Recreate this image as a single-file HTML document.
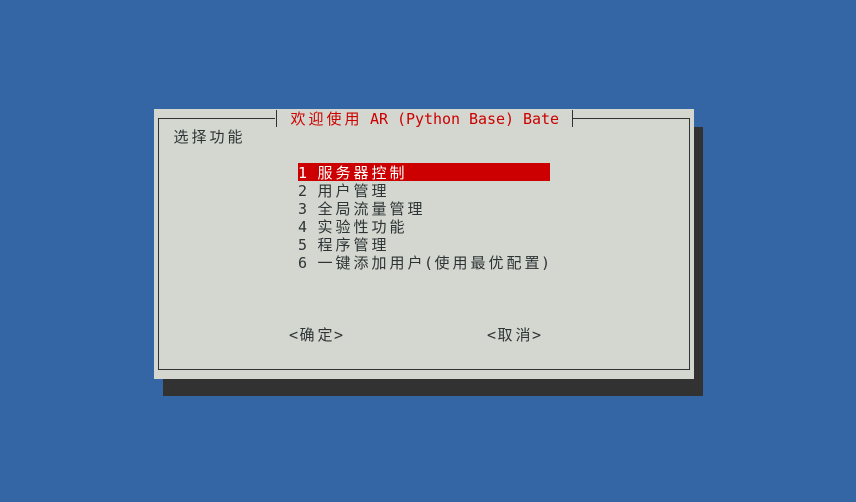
<!DOCTYPE html>
<html><head><meta charset="utf-8"><style>
body{margin:0;width:856px;height:502px;background:#3465a4;position:relative;overflow:hidden;font-family:"DejaVu Sans Mono","Noto Sans CJK SC",monospace;font-size:15px;color:#2e3436}
.a{position:absolute;white-space:nowrap;height:18px;line-height:20px}
.a span{display:inline-block;width:9px;text-align:center}
.a span.c{width:18px}
.l{position:absolute;background:#2e3436}
</style></head><body>
<div style="position:absolute;left:163px;top:127px;width:540px;height:269px;background:#323232"></div>
<div style="position:absolute;left:154px;top:109px;width:540px;height:270px;background:#d3d7cf"></div>
<div class="l" style="left:158px;top:118px;width:117px;height:1px"></div>
<div class="l" style="left:573px;top:118px;width:117px;height:1px"></div>
<div class="l" style="left:158px;top:118px;width:1px;height:252px"></div>
<div class="l" style="left:689px;top:118px;width:1px;height:252px"></div>
<div class="l" style="left:158px;top:369px;width:532px;height:1px"></div>
<div class="l" style="left:276px;top:110px;width:1px;height:17px"></div>
<div class="l" style="left:572px;top:110px;width:1px;height:17px"></div>
<div class="a" style="left:289px;top:109px;color:#cc0000"><span class="c">欢</span><span class="c">迎</span><span class="c">使</span><span class="c">用</span><span> </span><span>A</span><span>R</span><span> </span><span>(</span><span>P</span><span>y</span><span>t</span><span>h</span><span>o</span><span>n</span><span> </span><span>B</span><span>a</span><span>s</span><span>e</span><span>)</span><span> </span><span>B</span><span>a</span><span>t</span><span>e</span></div>
<div class="a" style="left:172px;top:127px"><span class="c">选</span><span class="c">择</span><span class="c">功</span><span class="c">能</span></div>
<div class="a" style="left:298px;top:163px;width:252px;background:#cc0000;color:#fff"><span>1</span><span> </span><span class="c">服</span><span class="c">务</span><span class="c">器</span><span class="c">控</span><span class="c">制</span></div>
<div class="a" style="left:298px;top:181px"><span>2</span><span> </span><span class="c">用</span><span class="c">户</span><span class="c">管</span><span class="c">理</span></div>
<div class="a" style="left:298px;top:199px"><span>3</span><span> </span><span class="c">全</span><span class="c">局</span><span class="c">流</span><span class="c">量</span><span class="c">管</span><span class="c">理</span></div>
<div class="a" style="left:298px;top:217px"><span>4</span><span> </span><span class="c">实</span><span class="c">验</span><span class="c">性</span><span class="c">功</span><span class="c">能</span></div>
<div class="a" style="left:298px;top:235px"><span>5</span><span> </span><span class="c">程</span><span class="c">序</span><span class="c">管</span><span class="c">理</span></div>
<div class="a" style="left:298px;top:253px"><span>6</span><span> </span><span class="c">一</span><span class="c">键</span><span class="c">添</span><span class="c">加</span><span class="c">用</span><span class="c">户</span><span>(</span><span class="c">使</span><span class="c">用</span><span class="c">最</span><span class="c">优</span><span class="c">配</span><span class="c">置</span><span>)</span></div>
<div class="a" style="left:289px;top:325px"><span>&lt;</span><span class="c">确</span><span class="c">定</span><span>&gt;</span></div>
<div class="a" style="left:487px;top:325px"><span>&lt;</span><span class="c">取</span><span class="c">消</span><span>&gt;</span></div>
</body></html>
